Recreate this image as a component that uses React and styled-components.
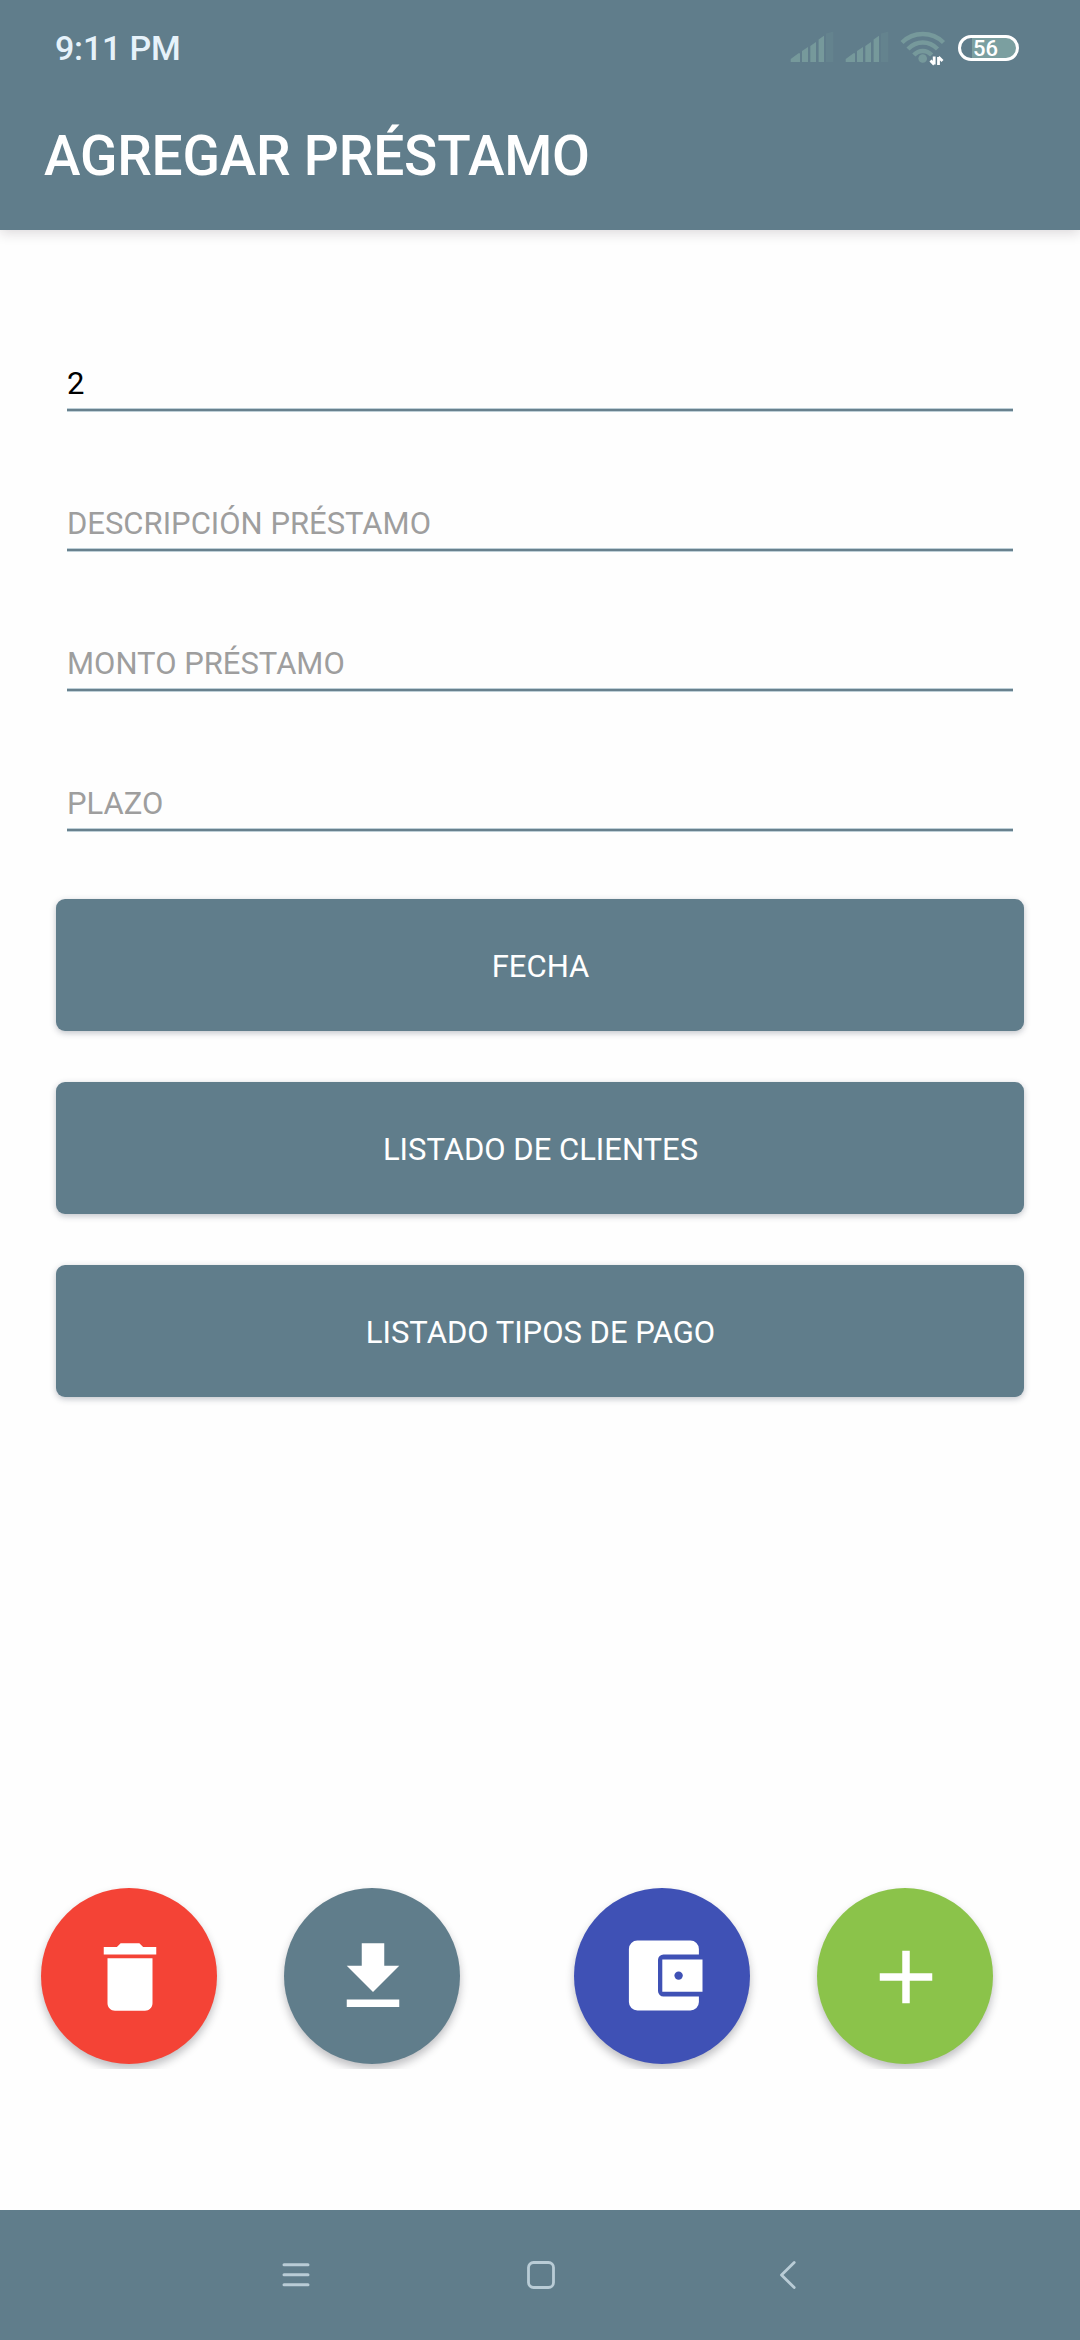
import React, { useState } from 'react';
import styled, { createGlobalStyle } from 'styled-components';

const PRIMARY = '#607d8b';

const loanFields = [
  { name: 'id', placeholder: 'ID' },
  { name: 'descripcion', placeholder: 'DESCRIPCIÓN PRÉSTAMO' },
  { name: 'monto', placeholder: 'MONTO PRÉSTAMO' },
  { name: 'plazo', placeholder: 'PLAZO' },
];

const formButtons = ['FECHA', 'LISTADO DE CLIENTES', 'LISTADO TIPOS DE PAGO'];

const SignalIcon = () => (
  <svg width='44' height='32' viewBox='0 0 44 32' fill='#76999b'>
    <path d='M0.7 31V28L8.5 22.3H10V31Z' />
    <path d='M12 31V20L18 16V31Z' />
    <path d='M20.3 31V15L26 11V31Z' />
    <path d='M28.6 31V8.5L34 4.8V31Z' />
    <path d='M36 31V2.5L43.3 0.5V31Z' opacity='.2' />
  </svg>
);

const WifiIcon = () => (
  <svg width='46' height='36' viewBox='0 0 46 36' fill='none'>
    <g stroke='#76999b' strokeWidth='4.4'>
      <path d='M2 11.5C13.5 0.2 32 0.2 43.5 11.5' />
      <path d='M8 18C16.5 9.4 29 9.4 37.5 18' />
      <path d='M13.8 24C19 18.6 26.5 18.6 31.7 24' />
    </g>
    <circle cx='22.7' cy='27.5' r='4.3' fill='#76999b' />
    <path d='M34.2 25.5V33.5M34.2 33.5L30.5 29.5M38.5 34V26M38.5 26L42.5 30' stroke='#fff' strokeWidth='2.8' />
  </svg>
);

const DeleteIcon = () => (
  <svg width='90' height='90' viewBox='0 0 24 24' fill='#fff'>
    <path d='M6 19c0 1.1.9 2 2 2h8c1.1 0 2-.9 2-2V7H6v12zM19 4h-3.5l-1-1h-5l-1 1H5v2h14V4z' />
  </svg>
);

const DownloadIcon = () => (
  <svg width='90' height='90' viewBox='0 0 24 24' fill='#fff'>
    <path d='M19 9h-4V3H9v6H5l7 7 7-7zM5 18v2h14v-2H5z' />
  </svg>
);

const WalletIcon = () => (
  <svg width='90' height='90' viewBox='0.3 0.5 90 90'>
    <path
      d='M19.7 9H72.7A8.5 8.5 0 0 1 81.2 17.5V23H46A5.5 5.5 0 0 0 40.3 28.5V59.5A5.5 5.5 0 0 0 46 65H81.2V70.5A8.5 8.5 0 0 1 72.7 79H19.7A8.5 8.5 0 0 1 11.2 70.5V17.5A8.5 8.5 0 0 1 19.7 9Z'
      fill='#fff'
    />
    <path d='M44.6 28H84.8V60.3H44.6Z' fill='#fff' />
    <circle cx='60.9' cy='44.1' r='4.2' fill='#3f51b5' />
  </svg>
);

const AddIcon = () => (
  <svg width='90' height='90' viewBox='0 0 24 24' fill='#fff'>
    <path d='M19 13h-6v6h-2v-6H5v-2h6V5h2v6h6v2z' />
  </svg>
);

const MenuIcon = () => (
  <svg width='28' height='30' viewBox='0 0 28 30' stroke='#b9ccd6' strokeWidth='3' strokeLinecap='round'>
    <path d='M2 4.7H26M2 14.7H26M2 24.7H26' />
  </svg>
);

const HomeIcon = () => (
  <svg width='30' height='30' viewBox='0 0 30 30' fill='none' stroke='#b9ccd6' strokeWidth='2.8'>
    <rect x='2.5' y='2.5' width='25' height='25' rx='5' />
  </svg>
);

const BackIcon = () => (
  <svg width='18' height='30' viewBox='0 0 18 30' fill='none' stroke='#b9ccd6' strokeWidth='2.8' strokeLinecap='round' strokeLinejoin='round'>
    <path d='M15.2 2.5L2.5 15L15.2 27.5' />
  </svg>
);

const App = () => {
  const [loan, setLoan] = useState({ id: '2', descripcion: '', monto: '', plazo: '' });

  const changeHandler = ({ target }) => {
    setLoan({ ...loan, [target.name]: target.value });
  };

  return (
    <Screen>
      <GlobalStyle />
      <Header>
        <StatusBar>
          <Clock>9:11 PM</Clock>
          <StatusIcons>
            <SignalIcon />
            <SignalIcon />
            <WifiIcon />
            <Battery>56</Battery>
          </StatusIcons>
        </StatusBar>
        <Title>AGREGAR PRÉSTAMO</Title>
      </Header>

      <Form>
        {loanFields.map(({ name, placeholder }) => (
          <Field
            key={name}
            type='text'
            name={name}
            placeholder={placeholder}
            value={loan[name]}
            onChange={changeHandler}
          />
        ))}
        <ButtonList>
          {formButtons.map(label => <FormButton type='button' key={label}>{label}</FormButton>)}
        </ButtonList>
      </Form>

      <Actions>
        <ActionGroup>
          <RoundButton aria-label='Eliminar' $color='#f44336'><DeleteIcon /></RoundButton>
          <RoundButton aria-label='Guardar' $color={PRIMARY}><DownloadIcon /></RoundButton>
        </ActionGroup>
        <ActionGroup>
          <RoundButton aria-label='Pagos' $color='#3f51b5'><WalletIcon /></RoundButton>
          <RoundButton aria-label='Agregar' $color='#8bc34a'><AddIcon /></RoundButton>
        </ActionGroup>
      </Actions>

      <NavBar>
        <MenuIcon />
        <HomeIcon />
        <BackIcon />
      </NavBar>
    </Screen>
  );
};

export default App;

const GlobalStyle = createGlobalStyle`
  * {
    box-sizing: border-box;
  }

  body {
    margin: 0;
    background: #fff;
    font-family: Roboto, sans-serif;
  }

  svg {
    display: block;
    flex: none;
  }
`;

const Screen = styled.div`
  display: flex;
  flex-flow: column nowrap;
  width: 1080px;
  height: 2340px;
  overflow: hidden;
  background: #fefefe;
`;

const Header = styled.header`
  display: flex;
  flex-flow: column nowrap;
  flex: none;
  height: 230px;
  color: #fff;
  background: ${PRIMARY};
  box-shadow: 0 3px 12px rgba(40, 20, 30, 0.16);
`;

const StatusBar = styled.div`
  display: flex;
  justify-content: space-between;
  height: 84px;
  padding: 28px 61px 0 55px;
`;

const Clock = styled.span`
  color: #e6f2fa;
  font-size: 34px;
  font-weight: 500;
  letter-spacing: -0.2px;
  line-height: 40px;
`;

const StatusIcons = styled.div`
  display: flex;
  align-items: flex-start;
  gap: 11px;
  padding-top: 3px;
`;

const Battery = styled.div`
  width: 61px;
  height: 26px;
  margin: 4px 0 0 1px;
  padding-left: 12px;
  border: 3px solid #fff;
  border-radius: 13px;
  background: linear-gradient(to right, ${PRIMARY} 11px, #7b9fa0 11px);
  font-size: 22px;
  font-weight: 500;
  line-height: 21px;
`;

const Title = styled.h1`
  margin: 0;
  padding: 40px 0 0 44px;
  font-size: 55px;
  font-weight: 500;
  letter-spacing: -0.2px;
  line-height: 64px;
`;

const Form = styled.form`
  display: flex;
  flex-flow: column nowrap;
  padding: 119px 56px 0;
`;

/* the shadows soften both edges of the underline */
const Field = styled.input`
  height: 62px;
  margin: 0 11px 78px;
  padding: 9px 0 0;
  border: 0;
  border-bottom: 2px solid #68818e;
  box-shadow: inset 0 -1px 0 #bfd0d8, 0 1px 0 #bfd0d8;
  outline: none;
  background: none;
  color: #000;
  font: 400 31px Roboto, sans-serif;

  &::placeholder {
    color: #9e9e9e;
    opacity: 1;
  }
`;

const ButtonList = styled.div`
  display: flex;
  flex-flow: column nowrap;
  gap: 51px;
  margin-top: -10px;
`;

const FormButton = styled.button`
  height: 132px;
  padding: 2px 0 0 1px;
  border: 0;
  border-radius: 9px;
  background: ${PRIMARY};
  box-shadow: 0 2px 6px rgba(30, 40, 60, 0.28);
  color: #fff;
  font: 400 31px Roboto, sans-serif;
`;

const Actions = styled.div`
  display: flex;
  justify-content: space-between;
  margin-top: auto;
  padding: 0 87px 146px 41px;
`;

const ActionGroup = styled.div`
  display: flex;
  gap: 67px;
`;

const RoundButton = styled.button`
  display: flex;
  align-items: center;
  justify-content: center;
  width: 176px;
  height: 176px;
  padding: 1px 0 0 1px;
  border: 0;
  border-radius: 50%;
  background: ${({ $color }) => $color};
  box-shadow: 0 5px 9px rgba(30, 30, 40, 0.28);
  clip-path: inset(-20px -20px -5px);
`;

const NavBar = styled.nav`
  display: flex;
  justify-content: space-between;
  flex: none;
  height: 130px;
  padding: 50px 283px 0 282px;
  background: ${PRIMARY};

  svg:nth-child(2) {
    margin-right: 7px;
  }
`;
